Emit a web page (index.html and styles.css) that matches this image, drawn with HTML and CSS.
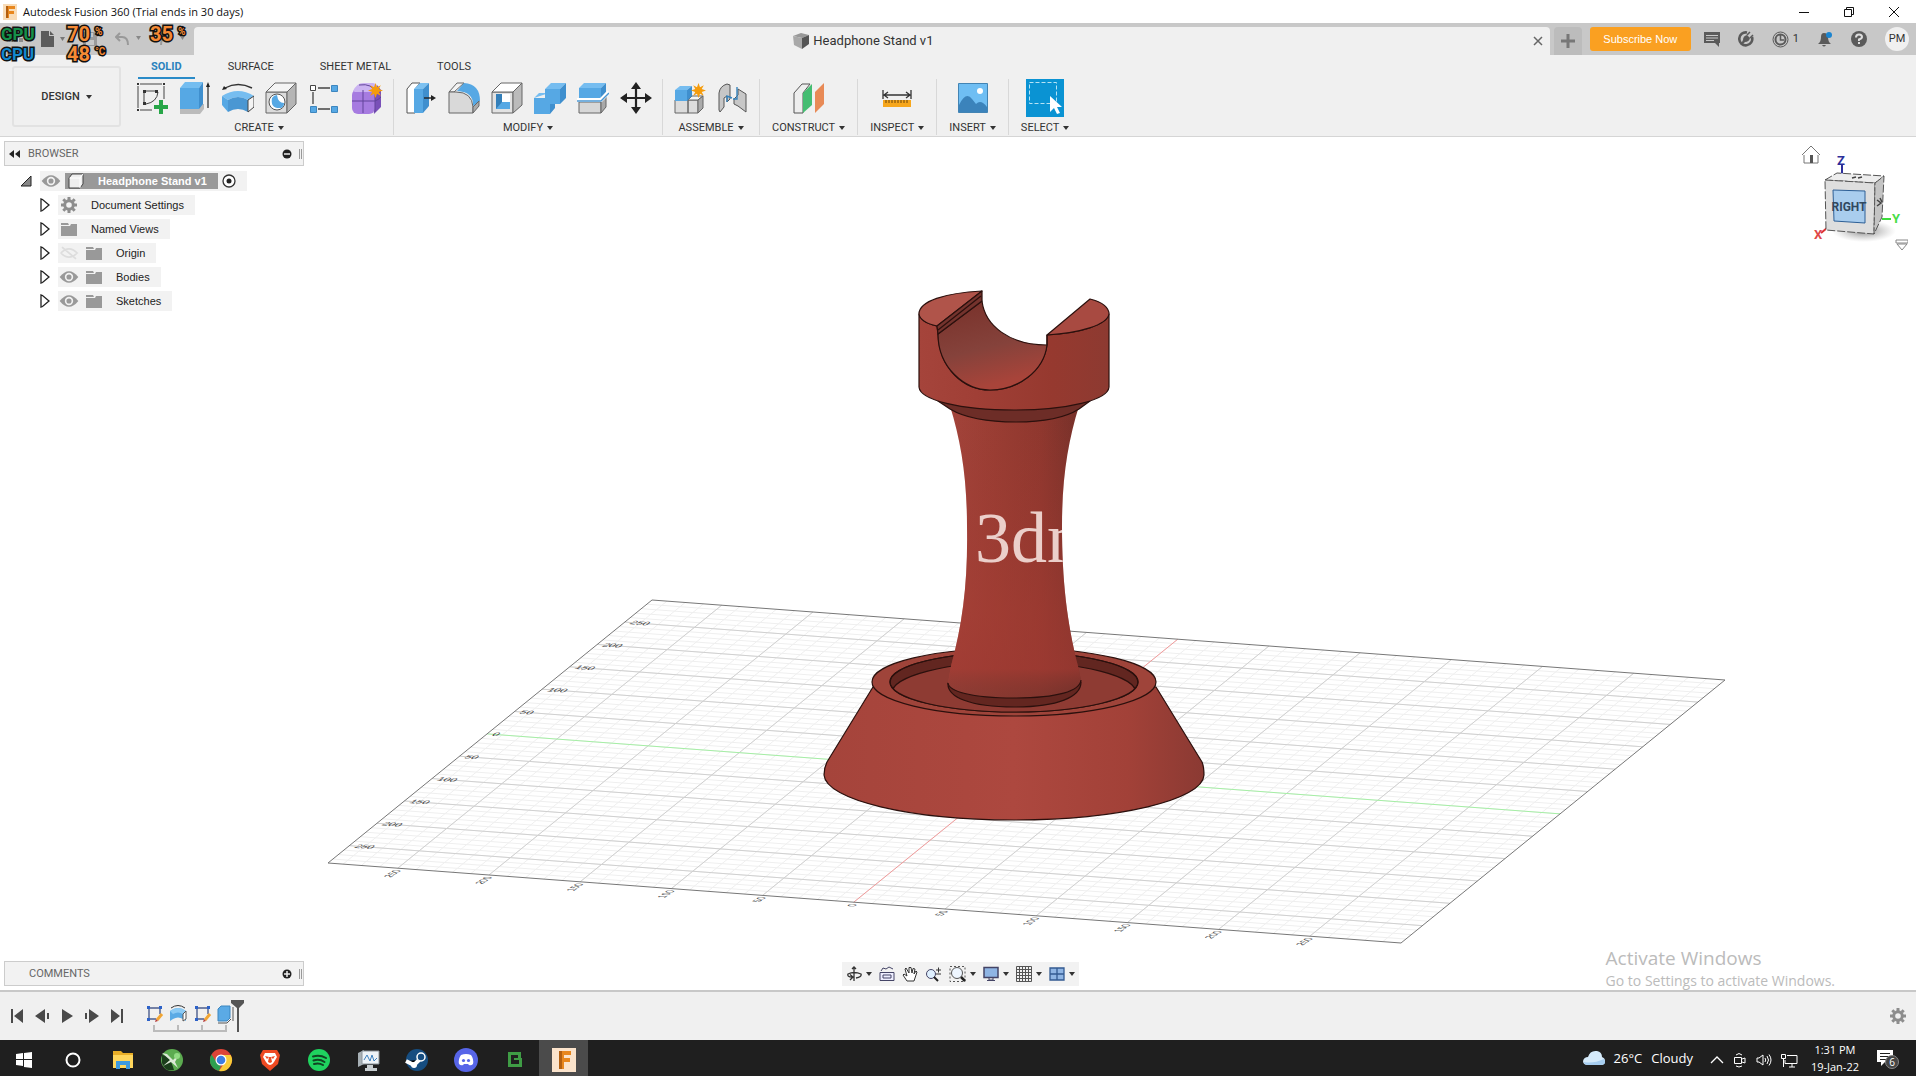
FILE: index.html
```html
<!DOCTYPE html>
<html lang="en">
<head>
<meta charset="utf-8">
<title>Autodesk Fusion 360</title>
<link rel="stylesheet" href="styles.css">
</head>
<body>
<svg class="defs" aria-hidden="true">
  <defs>
    <symbol id="folder" viewBox="0 0 16 14"><path fill="#999" d="M0 1h7l1 2H0zM0 4h9l1-2h6v12H0z"/></symbol>
    <symbol id="eye" viewBox="0 0 16 12"><path fill="#999" d="M0 6Q8-4 16 6 8 16 0 6z"/><circle cx="8" cy="6" r="3.6" fill="#f2f2f2"/><circle cx="8" cy="6" r="2.2" fill="#999"/></symbol>
    <symbol id="gear" viewBox="0 0 16 16"><circle cx="8" cy="8" r="4.3" fill="none" stroke="#8d8d8d" stroke-width="3"/><path stroke="#8d8d8d" stroke-width="3" d="M8 0v3M8 13v3M0 8h3M13 8h3M2.3 2.3l2 2M11.7 11.7l2 2M13.7 2.3l-2 2M4.3 11.7l-2 2"/></symbol>
    <symbol id="arrow" viewBox="0 0 10 14"><path fill="#fff" stroke="#222" stroke-width="1.3" d="M1 1v12l1.5-.5L9 7 2.500 1.500z"/></symbol>
    <symbol id="sketch-step" viewBox="0 0 18 18"><path fill="none" stroke="#4b5c8c" stroke-width="1.400" d="M3 3h11v6M3 3v11h7"/><path fill="#2d62c8" d="M1 1h3v3H1zM13 1h3v3h-3zM1 13h3v3H1z"/><path stroke="#f1a533" stroke-width="3" d="M16 9l-5 6"/><path fill="#b63c3c" d="M9 17l1-3 2 2z"/></symbol>
    <symbol id="burst" viewBox="0 0 14 14"><path fill="#f59c0c" d="M7 0l1.400 4L12 2l-2 3.600L14 7l-4 1.400L12 12 8.400 10 7 14l-1.400-4L2 12l2-3.600L0 7l4-1.400L2 2l3.600 2z"/></symbol>
  </defs>
</svg>
<div class="app">
  <header class="titlebar">
    <svg class="app-logo" viewBox="0 0 14 16" width="14" height="16"><path fill="#f8dcb8" d="M0 0h14v16H0z"/><path fill="#e8871e" d="M3 2h9v3H6v2h5v3H6v4H3z"/><path fill="#b35f10" d="M3 2h2v12H3z"/></svg>
    <h1 class="window-title">Autodesk Fusion 360 (Trial ends in 30 days)</h1>
    <div class="window-buttons">
      <button aria-label="Minimize"><svg width="12" height="12"><path stroke="#111" d="M1 6.500h10"/></svg></button>
      <button aria-label="Restore"><svg width="12" height="12"><path fill="none" stroke="#111" d="M1.500 3.500h7v7h-7zM3.500 3V1.500h7v7H9"/></svg></button>
      <button aria-label="Close window"><svg width="12" height="12"><path stroke="#111" d="M1 1l10 10M11 1L1 11"/></svg></button>
    </div>
  </header>

  <div class="tabstrip">
    <div class="quick-access">
      <button aria-label="Data panel"><svg width="14" height="14"><path fill="#8b8b8b" d="M0 1h4v4H0zM5 1h4v4H5zM10 1h4v4h-4zM0 6h4v4H0zM5 6h4v4H5zM10 6h4v4h-4z"/></svg></button>
      <button aria-label="File"><svg width="24" height="16"><path fill="#5c5c5c" d="M0 0h8v5h5v11H0zM9 0l4 4H9z"/><path fill="#777" d="M19 6h5l-2.500 4z"/></svg></button>
      <button aria-label="Save"><svg width="14" height="14"><path fill="#9b9b9b" d="M0 0h14v14H0zM3 8v5h8V8zM3 1v4h7V1z" fill-rule="evenodd"/></svg></button>
      <button aria-label="Undo"><svg width="26" height="14"><path fill="none" stroke="#999" stroke-width="2" d="M5 1L1 5l4 4M2 5h5q6 0 6 8"/><path fill="#888" d="M21 4h5l-2.500 4z"/></svg></button>
      <button aria-label="Redo"><svg width="26" height="14"><path fill="none" stroke="#999" stroke-width="2" d="M8 1l4 4-4 4M12 5H8Q2 5 2 13"/><path fill="#888" d="M21 4h5l-2.500 4z"/></svg></button>
    </div>
    <div class="document-tab">
      <div class="document-name">
        <svg width="16" height="16" viewBox="0 0 16 16"><path fill="#999" d="M0 3l8-3 8 2-7 3z"/><path fill="#a9a9a9" d="M0 3l9 2v11l-8-4z"/><path fill="#555" d="M9 5l7-3v9l-7 5z"/></svg>
        <span>Headphone Stand v1</span>
      </div>
      <button class="close-tab" aria-label="Close document"><svg width="10" height="10"><path stroke="#666" stroke-width="1.500" d="M1 1l8 8M9 1L1 9"/></svg></button>
    </div>
    <button class="new-tab" aria-label="New design"><svg width="14" height="14"><path stroke="#777" stroke-width="3" d="M7 0v14M0 7h14"/></svg></button>
    <button class="subscribe">Subscribe Now</button>
    <div class="account">
      <button aria-label="Comments"><svg width="16" height="15"><path fill="#5a5a5a" d="M0 0h16v11h-1v4l-4-4H0z"/><path stroke="#c8c8c8" stroke-width="1.200" d="M2 3.500h12M2 6h12M2 8.500h8"/></svg></button>
      <button aria-label="Extensions"><svg width="16" height="16"><path fill="none" stroke="#5a5a5a" stroke-width="2.600" d="M14 6a6.500 6.500 0 1 1-5-4.500"/><path fill="#5a5a5a" d="M5 9q0-4 4-5l3 3q-1 4-5 4l-3 3-1-1z"/><path stroke="#5a5a5a" stroke-width="1.500" d="M9 4l3-3M12 7l3-3"/></svg></button>
      <button class="jobs" aria-label="Job status"><svg width="17" height="17"><circle cx="8.500" cy="8.500" r="7.500" fill="none" stroke="#5a5a5a"/><circle cx="8.500" cy="8.500" r="5" fill="none" stroke="#5a5a5a" stroke-width="2"/><path fill="none" stroke="#5a5a5a" stroke-width="1.500" d="M8.500 4v5H12"/></svg><span>1</span></button>
      <button aria-label="Notifications"><svg width="16" height="16"><path fill="#5a5a5a" d="M1 13q3-2 3-7 0-4 3-4 4 0 4 4 0 5 3 7zM5 14h4q-2 3-4 0z"/><circle cx="12" cy="4" r="3" fill="#1a84d0"/></svg></button>
      <button aria-label="Help"><svg width="16" height="16"><circle cx="8" cy="8" r="8" fill="#5a5a5a"/><path fill="none" stroke="#ddd" stroke-width="2" d="M5 6.500Q5 3.500 8 3.500t3 2.500Q11 7.500 8 8.500V10M8 11v2"/></svg></button>
      <button class="avatar">PM</button>
    </div>
  </div>

  <div class="ribbon">
    <button class="workspace">DESIGN <i class="caret"></i></button>
    <div class="ribbon-main">
      <nav class="ribbon-tabs">
        <button class="active">SOLID</button><button>SURFACE</button><button>SHEET METAL</button><button>TOOLS</button>
      </nav>
      <div class="groups">
        <section class="group">
          <div class="tools">
            <button aria-label="Create sketch"><svg viewBox="0 0 32 32"><path fill="none" stroke="#444" d="M4 2h22M2 4v22M28 4v13M4 28h12M8 20V9h12M22 10q-1 10-12 12"/><path fill="#333" d="M1 1h2v2H1zM27 1h2v2h-2zM1 27h2v2H1zM7 8h3v3H7zM19 8h3v3h-3zM7 20h3v3H7z"/><path fill="#27a648" d="M23 18h4v5h5v4h-5v5h-4v-5h-5v-4h5z"/></svg></button>
            <button aria-label="Extrude"><svg viewBox="0 0 32 32"><path fill="#bbb" d="M1 27l5-5h19v5l-4 5H1z"/><path fill="#56a8e4" d="M1 6h19v21H1z"/><path fill="#74bdf0" d="M1 6l5-6h18l-4 6z"/><path fill="#3f8fce" d="M20 6l4-6v22l-4 5z"/><path stroke="#333" stroke-width="1.300" d="M29 26V3"/><path fill="#222" d="M27 5l2-5 2 5z"/></svg></button>
            <button aria-label="Revolve"><svg viewBox="0 0 32 32"><path fill="none" stroke="#333" stroke-width="1.400" d="M3 6Q16-1 30 6"/><path fill="#222" d="M0 8l2-4 3 3z"/><path fill="#76bdf0" d="M0 14Q16 4 32 14l-6 4q-10-6-20 0z"/><path fill="#56a8e4" d="M0 14l6 4v12l-6-7z"/><path fill="#4a97d3" d="M6 18q10-6 20 0v12q-10-6-20 0z"/><path fill="#f4f4f4" stroke="#444" d="M26 18l6-4v11l-6 5z"/></svg></button>
            <button aria-label="Hole"><svg viewBox="0 0 32 32"><path fill="#dcdcdc" stroke="#666" d="M1 10h21v21H1z"/><path fill="#f4f4f4" stroke="#666" d="M1 10l9-9h21l-9 9z"/><path fill="#b5b5b5" stroke="#666" d="M22 10l9-9v21l-9 9z"/><circle cx="12" cy="20" r="8" fill="#fff" stroke="#555"/><path fill="#56a8e4" d="M7 16q-2 11 9 10 3-1 3-5-6 0-7-8-3 0-5 3z"/></svg></button>
            <button aria-label="Rectangular pattern"><svg viewBox="0 0 32 32"><path fill="none" stroke="#444" stroke-width="1.300" d="M10 6h12M5 10v12M10 27h12"/><path fill="#fff" stroke="#444" d="M2.500 3.500h5v5h-5z"/><path fill="#56a8e4" stroke="#3d86bf" d="M23.500 3.500h6v6h-6zM2.500 24.500h6v6h-6zM23.500 24.500h6v6h-6z"/></svg></button>
            <button aria-label="Create form"><svg viewBox="0 0 32 32"><path fill="#7950b8" d="M21 10l5-7 4 5v17l-7 7z"/><rect x="1" y="7" width="23" height="25" rx="6" fill="#a67be0"/><path fill="#cbb3f1" d="M2 9q4-8 10-8h10q5 1 4 5l-4 4H4z"/><path fill="none" stroke="#62449b" d="M1 19h23q3-1 6-4M12 8v23M8 3q14-2 16 8v19"/><use href="#burst" x="17" y="1" width="15" height="15"/></svg></button>
          </div>
          <button class="group-label">CREATE <i class="caret"></i></button>
        </section>
        <section class="group">
          <div class="tools">
            <button aria-label="Press pull"><svg viewBox="0 0 32 32"><path fill="#fff" stroke="#555" d="M2 7l5-6h8l-5 6v24H2z"/><path fill="#56a8e4" d="M9 7h9v24H9z"/><path fill="#7cc1f1" d="M9 7l6-6h9l-6 6z"/><path fill="#3f8fce" d="M18 7l6-6v23l-6 7z"/><path stroke="#222" stroke-width="1.400" d="M19 16h9"/><path fill="#222" d="M26 13l5 3-5 3z"/></svg></button>
            <button aria-label="Fillet"><svg viewBox="0 0 32 32"><path fill="#f3f3f3" stroke="#666" d="M1 10l8-9h7L6 10z"/><path fill="#56a8e4" d="M16 1q16 1 16 18l-7 5q1-14-16-15z"/><path fill="#d9d9d9" stroke="#666" d="M1 10h7q16 0 17 15v6H1z"/><path fill="#aaa" stroke="#666" d="M25 25l6-6v5l-6 7z"/></svg></button>
            <button aria-label="Shell"><svg viewBox="0 0 32 32"><path fill="#e2e2e2" stroke="#666" d="M1 10h21v21H1z"/><path fill="#fff" stroke="#666" d="M1 10l9-9h21l-9 9z"/><path fill="#bbb" stroke="#666" d="M22 10l9-9v22l-9 8z"/><path fill="#56a8e4" d="M5 12h14v15H5z"/><path fill="#fff" d="M11 12h8v8h-8z"/><path fill="#347fb9" d="M5 12h6v8l-6 7z"/></svg></button>
            <button aria-label="Combine"><svg viewBox="0 0 32 32"><path fill="#76bdf0" d="M0 16l5-5h6V7l6-6h15l-6 6H12v5z"/><path fill="#56a8e4" d="M0 16h11V7h15v15H16v10H0z"/><path fill="#3f8fce" d="M26 7l6-6v15l-6 6zM16 22h5v4l-5 6z"/></svg></button>
            <button aria-label="Split body"><svg viewBox="0 0 32 32"><path fill="#d7d7d7" stroke="#666" d="M2 20h22v11H2z"/><path fill="#a9a9a9" stroke="#666" d="M24 20l5-6v11l-5 6z"/><path fill="#56a8e4" d="M2 6h22v10H2z"/><path fill="#76bdf0" d="M2 6l5-5h22l-5 5z"/><path fill="#3f8fce" d="M24 6l5-5v9l-5 6z"/><path fill="none" stroke="#fff" stroke-width="4" d="M0 18h24l8-8"/><path fill="none" stroke="#4b96d2" stroke-width="1.500" d="M0 19h24l8-8"/></svg></button>
            <button aria-label="Move"><svg viewBox="0 0 32 32"><path stroke="#222" stroke-width="2.200" d="M16 4v24M4 16h24"/><path fill="#222" d="M16 0l5 7H11zM16 32l5-7H11zM0 16l7-5v10zM32 16l-7-5v10z"/></svg></button>
          </div>
          <button class="group-label">MODIFY <i class="caret"></i></button>
        </section>
        <section class="group">
          <div class="tools">
            <button aria-label="New component"><svg viewBox="0 0 32 32"><path fill="#dcdcdc" stroke="#666" d="M1 18h13v13H1zM14 18h10v13H14z"/><path fill="#f5f5f5" stroke="#666" d="M14 18l4-4h11l-5 4z"/><path fill="#aaa" stroke="#666" d="M24 18l5-4v12l-5 5z"/><path fill="#56a8e4" d="M1 8h12v11H1z"/><path fill="#76bdf0" d="M1 8l5-4h12l-5 4z"/><path fill="#3f8fce" d="M13 8l5-4v10l-5 5z"/><use href="#burst" x="17" y="1" width="15" height="15"/></svg></button>
            <button aria-label="Joint"><svg viewBox="0 0 32 32"><path fill="#c7c7c7" stroke="#555" d="M2 11q1-7 8-9l3 1v14l-3 3v-6l-3 2v9l-4 5-1-2zM17 17l4-4V7l8 5v18l-8-6-4-2z"/><path fill="none" stroke="#3583bd" stroke-width="1.400" d="M10 20v-6l5 2M20 5v12h-4"/></svg></button>
          </div>
          <button class="group-label">ASSEMBLE <i class="caret"></i></button>
        </section>
        <section class="group wide">
          <div class="tools"><button aria-label="Construct plane"><svg viewBox="0 0 32 32"><path fill="#eee" stroke="#555" d="M1 11l8-9h8l-7 9v20H1z"/><path fill="#45bd72" d="M10 11l9-9v21l-9 8z"/><path fill="#e88a56" d="M22 10l9-9v21l-9 9z"/></svg></button></div>
          <button class="group-label">CONSTRUCT <i class="caret"></i></button>
        </section>
        <section class="group wide">
          <div class="tools"><button aria-label="Measure"><svg viewBox="0 0 32 32"><path fill="none" stroke="#333" stroke-width="1.300" d="M2 8v9M30 8v9M4 13h24M7 10l-4 3 4 3M25 10l4 3-4 3"/><path fill="#f7a71c" d="M2 18h28v7H2z"/><path stroke="#6a4206" d="M5 18v3M8 18v3M11 18v3M14 18v3M17 18v3M20 18v3M23 18v3M26 18v3"/></svg></button></div>
          <button class="group-label">INSPECT <i class="caret"></i></button>
        </section>
        <section class="group wide">
          <div class="tools"><button aria-label="Insert image"><svg viewBox="0 0 32 32"><path fill="#6fbef3" stroke="#4284b4" d="M1.500 1.500h29v29h-29z"/><circle cx="23" cy="9" r="3" fill="#fff"/><path fill="#3b83bb" d="M2 23q7-14 13-6l4 5q5-5 11 3v5H2z"/></svg></button></div>
          <button class="group-label">INSERT <i class="caret"></i></button>
        </section>
        <section class="group wide">
          <div class="tools"><button class="selected" aria-label="Select"><svg viewBox="0 0 38 38"><path fill="none" stroke="#b7e3f5" stroke-dasharray="4 2" d="M3.500 3.500h27v21h-27z"/><path fill="#fff" d="M24 17v16l4-4 3 6 3-1-3-6h5z"/></svg></button></div>
          <button class="group-label">SELECT <i class="caret"></i></button>
        </section>
      </div>
    </div>
  </div>

  <main class="viewport">
    <svg class="scene" viewBox="0 137 1916 853" role="img" aria-label="Headphone stand model">
      <defs>
        <linearGradient id="side"><stop offset="0" stop-color="#a5443b"/><stop offset=".3" stop-color="#a03f36"/><stop offset=".7" stop-color="#96392f"/><stop offset="1" stop-color="#8d3a31"/></linearGradient>
        <linearGradient id="shaft"><stop offset="0" stop-color="#a3443b"/><stop offset=".35" stop-color="#993d33"/><stop offset=".7" stop-color="#8e372e"/><stop offset="1" stop-color="#743029"/></linearGradient>
        <linearGradient id="shade" x2="0" y2="1"><stop offset="0" stop-color="#a03a32" stop-opacity="0"/><stop offset=".7" stop-color="#a63c33" stop-opacity=".5"/><stop offset=".9" stop-color="#a03a32" stop-opacity=".7"/><stop offset="1" stop-color="#6e332d" stop-opacity=".4"/></linearGradient>
        <linearGradient id="base"><stop offset="0" stop-color="#a5443b"/><stop offset=".5" stop-color="#ad483f"/><stop offset=".8" stop-color="#a24138"/><stop offset="1" stop-color="#8b3a33"/></linearGradient>
        <linearGradient id="groove" x2=".3" y2="1"><stop offset="0" stop-color="#783029"/><stop offset=".6" stop-color="#85423b"/><stop offset="1" stop-color="#a8443a"/></linearGradient>
        <clipPath id="well"><ellipse cx="1014" cy="682" rx="124" ry="30"/></clipPath>
        <clipPath id="column"><path d="M950 406C961 441 967 478 967 526C968 580 963 623 951 678H1079C1067 623 1062 580 1062 526C1062 478 1068 441 1079 406Z"/></clipPath>
      </defs>
      <g id="grid"></g>
      <g stroke="#2b100d" stroke-width="1.200" stroke-linejoin="round">
        <path fill="url(#base)" d="M873 687L827 762C824 768 824 771 824 775C826 800 910 820 1014 820S1203 800 1204 775C1204 770 1204 767 1202 762L1156 687Z"/>
        <ellipse cx="1014" cy="682" rx="142" ry="34" fill="#9f443a"/>
        <ellipse cx="1014" cy="682" rx="124" ry="30" fill="#622620"/>
        <ellipse cx="1014" cy="693" rx="122" ry="31" fill="#8e3b33" clip-path="url(#well)"/>
        <ellipse cx="1014" cy="682" rx="124" ry="30" fill="none"/>
        <path fill="#632620" d="M948 683C947 697 970 707 1014 707S1081 697 1081 682Z"/>
        <g stroke="none">
          <path id="shaft-body" fill="url(#shaft)" d="M950 406C961 441 967 478 967 526C968 580 963 623 951 666L948 683C949 691 970 698 1014 698S1080 691 1081 680L1078 666C1067 623 1062 580 1062 526C1062 478 1068 441 1079 406Z"/>
          <path fill="url(#shade)" d="M950 406C961 441 967 478 967 526C968 580 963 623 951 666L948 683C949 691 970 698 1014 698S1080 691 1081 680L1078 666C1067 623 1062 580 1062 526C1062 478 1068 441 1079 406Z"/>
        </g>
        <path fill="none" d="M948 683C949 691 970 698 1014 698S1080 691 1081 680"/>
        <path fill="#6d2d27" d="M938 401L950 409C965 418 988 422 1016 422C1048 422 1068 416 1079 409L1090 401Z"/>
        <path fill="url(#side)" d="M919 314V387C920 400 960 410 1014 410S1108 400 1109 387V314C1107 325 1080 333 1047 335V345C1043 372 1018 390 990 390C964 390 940 370 938 334L937 326C928 324 920 320 919 314Z"/>
        <path fill="#b0544a" d="M982 291C945 293 919 301 919 314C920 320 928 324 937 326Z"/>
        <path fill="#a84a41" d="M1047 335L1090 299C1103 302 1109 308 1109 314C1107 325 1080 333 1047 335Z"/>
        <path fill="url(#groove)" d="M938 334C938 368 965 390 990 390C1018 390 1044 371 1047 345C1010 345 985 326 982 301Z"/>
        <path fill="#74332d" d="M937 326L982 291V301L938 334Z"/>
        <path fill="none" d="M938 330L981 296M1047 345V335"/>
      </g>
      <text class="watermark" x="975" y="562" clip-path="url(#column)">3dm</text>
    </svg>

    <section class="browser">
      <div class="panel-head">
        <svg width="11" height="8"><path fill="#222" d="M5 0v8L0 4zM11 0v8L6 4z"/></svg>
        <h2>BROWSER</h2>
        <button aria-label="Collapse"><svg width="10" height="10"><circle cx="5" cy="5" r="4.500" fill="#222"/><path stroke="#eee" stroke-width="1.500" d="M2 5h6"/></svg></button>
        <i class="grip"></i>
      </div>
      <ul class="tree">
        <li class="root"><svg class="opened" width="12" height="12"><path fill="#888" stroke="#222" d="M11 1v10H1z"/></svg>
          <div class="node"><svg class="icon"><use href="#eye"/></svg><button class="title"><svg width="16" height="16" viewBox="0 0 16 16"><path fill="#eee" stroke="#444" d="M1 5l3-4h11v10l-3 4H1z"/><path fill="none" stroke="#fff" d="M1.500 5H12v10M12 5l3-4"/></svg>Headphone Stand v1</button><svg width="14" height="14"><circle cx="7" cy="7" r="6" fill="#fff" stroke="#333" stroke-width="1.300"/><circle cx="7" cy="7" r="2.500" fill="#222"/></svg></div></li>
        <li><svg class="closed"><use href="#arrow"/></svg><button class="node"><svg class="icon gear"><use href="#gear"/></svg><span>Document Settings</span></button></li>
        <li><svg class="closed"><use href="#arrow"/></svg><button class="node"><svg class="icon"><use href="#folder"/></svg><span>Named Views</span></button></li>
        <li><svg class="closed"><use href="#arrow"/></svg><button class="node"><svg class="icon" viewBox="0 0 16 12"><path fill="none" stroke="#ddd" stroke-width="1.500" d="M1 6q7-7 14 0-7 7-14 0M2 1l12 10"/></svg><svg class="icon"><use href="#folder"/></svg><span>Origin</span></button></li>
        <li><svg class="closed"><use href="#arrow"/></svg><button class="node"><svg class="icon"><use href="#eye"/></svg><svg class="icon"><use href="#folder"/></svg><span>Bodies</span></button></li>
        <li><svg class="closed"><use href="#arrow"/></svg><button class="node"><svg class="icon"><use href="#eye"/></svg><svg class="icon"><use href="#folder"/></svg><span>Sketches</span></button></li>
      </ul>
    </section>

    <svg class="viewcube" width="112" height="120" viewBox="1796 137 112 120">
      <defs><radialGradient id="cube-shadow"><stop offset="0" stop-color="#555" stop-opacity=".7"/><stop offset="1" stop-color="#999" stop-opacity="0"/></radialGradient></defs>
      <path fill="#fff" stroke="#777" d="M1802 155l9-9 9 9M1804 155v8h14v-8"/><path fill="#555" d="M1810 155h3v8h-3z"/>
      <ellipse cx="1864" cy="231" rx="32" ry="11" fill="url(#cube-shadow)"/>
      <path stroke="#2c2f9b" stroke-width="2" d="M1842 165v9"/><path stroke="#d33" stroke-width="2" d="M1827 228l-6 5"/><path stroke="#3ddc3d" stroke-width="2" d="M1882 219h9"/>
      <g stroke="#555" stroke-dasharray="8 2"><path fill="#ededed" d="M1825 180l12-7 47 3-9 7z"/><path fill="#dedede" d="M1825 180l50 3-1 51-48-4z"/><path fill="#c4c4c4" d="M1875 183l9-7-2 41-8 17z"/></g>
      <path fill="#a9cdee" stroke="#2d5f96" d="M1833 190l32 1v32l-31-2z"/>
      <path fill="none" stroke="#444" stroke-width="1.500" d="M1852 178l4-1M1858 178l4-1M1877 200l4 3-4 3M1880 198l2 4"/>
      <text class="cube-face" x="1849" y="211" text-anchor="middle">RIGHT</text>
      <text class="axis" x="1837" y="165" fill="#2c2f9b">Z</text><text class="axis" x="1814" y="239" fill="#e04848">X</text><text class="axis" x="1892" y="223" fill="#48dd48">Y</text>
      <path fill="#fff" stroke="#888" d="M1896 240h12v3h-12zM1897 244h10l-5 6z"/>
    </svg>

    <div class="bottom-row">
      <div class="panel-head comments">
        <h2>COMMENTS</h2>
        <button aria-label="Add comment"><svg width="10" height="10"><circle cx="5" cy="5" r="4.500" fill="#222"/><path stroke="#eee" stroke-width="1.500" d="M2 5h6M5 2v6"/></svg></button>
        <i class="grip"></i>
      </div>
      <div class="navbar">
        <button aria-label="Orbit"><svg width="16" height="16"><path fill="none" stroke="#333" stroke-width="1.300" d="M8 1v14M6 3l2-2 2 2M10 12q6-1 5-4-7-3-13 0-1 3 4 3M4 8.500l3 2.500-3 3"/></svg><i class="caret"></i></button>
        <button aria-label="Look at"><svg width="16" height="16"><path fill="#eef" stroke="#446" d="M1 6.500h14v8H1zM4 9h8v3H4z"/><path fill="none" stroke="#446" d="M2 5l2-3 3 1 3-2 4 2"/></svg></button>
        <button aria-label="Pan"><svg width="16" height="16"><path fill="#fff" stroke="#333" d="M5 15l-4-6 1-1 3 2-2-7 1-1 3 5V1.500h2L10 7l1-4.500 2 .5-1 5 2-3 1 1-3 9z"/></svg></button>
        <button aria-label="Zoom"><svg width="17" height="16"><circle cx="6" cy="8" r="4.500" fill="#dff0ff" stroke="#446"/><path stroke="#222" stroke-width="2" d="M9 11l4 4"/><path stroke="#333" d="M11 4h5M13.500 1.500v5M11 8h5"/></svg></button>
        <button aria-label="Fit"><svg width="17" height="16"><path fill="none" stroke="#555" stroke-dasharray="2 2" d="M1 .5h15v15H1z"/><circle cx="8" cy="7" r="5.500" fill="#eef6ff" stroke="#555"/><path stroke="#222" stroke-width="2.500" d="M12 11l4 4"/></svg><i class="caret"></i></button>
        <button aria-label="Display"><svg width="16" height="16"><path fill="#8fb5e4" stroke="#446" stroke-width="1.500" d="M1 1.500h14v10H1z"/><path fill="none" stroke="#446" d="M6 12v2h4v-2M4 14.500h8"/></svg><i class="caret"></i></button>
        <button aria-label="Grid"><svg width="16" height="16"><path fill="none" stroke="#555" d="M.5.500h15v15H.5zM3.500 0v16M6.500 0v16M9.500 0v16M12.500 0v16M0 3.500h16M0 6.500h16M0 9.500h16M0 12.500h16"/></svg><i class="caret"></i></button>
        <button aria-label="Viewports"><svg width="16" height="16"><path fill="#8fb5e4" stroke="#335a91" stroke-width="1.300" d="M1 2h14v12H1zM8 2v12M1 8h14"/></svg><i class="caret"></i></button>
      </div>
    </div>
    <div class="activate"><p class="activate-title">Activate Windows</p><p>Go to Settings to activate Windows.</p></div>
  </main>

  <div class="timeline">
    <div class="playback">
      <button aria-label="To start"><svg width="14" height="14"><path fill="#4a4a4a" d="M1 0h2v14H1zM13 0v14L4 7z"/></svg></button>
      <button aria-label="Step back"><svg width="14" height="14"><path fill="#4a4a4a" d="M10 0v14L0 7zM12 4h2v6h-2z"/></svg></button>
      <button aria-label="Play"><svg width="14" height="14"><path fill="#4a4a4a" d="M2 0v14l11-7z"/></svg></button>
      <button aria-label="Step forward"><svg width="14" height="14"><path fill="#4a4a4a" d="M4 0v14l10-7zM0 4h2v6H0z"/></svg></button>
      <button aria-label="To end"><svg width="14" height="14"><path fill="#4a4a4a" d="M1 0v14l9-7zM11 0h2v14h-2z"/></svg></button>
    </div>
    <svg class="steps" width="104" height="34">
      <use href="#sketch-step" x="3" y="6" width="18" height="18"/>
      <path fill="none" stroke="#333" d="M28 9q7-5 14 0"/><path fill="#5baae5" d="M27 12q8-6 16 0v10l-3-2q-5-3-10 0l-3 2z"/><path fill="#8ccaf4" d="M27 12q8-6 16 0l-3 3q-5-3-10 0z"/><path fill="#fff" stroke="#555" d="M40 15l3-3v8l-3 2z"/>
      <use href="#sketch-step" x="51" y="6" width="18" height="18"/>
      <path fill="#5baae5" stroke="#3d86bf" d="M75 10l3-3h9v12l-3 3h-9z"/><path fill="none" stroke="#555" d="M75 24h9l4-4M90 22V8"/>
      <path fill="none" stroke="#bbb" stroke-width="2" d="M11 26v6h72v-6M35 26v6M59 26v6"/>
      <path fill="#555" d="M88 1h13v3l-5 5v24h-2V9l-6-5z"/>
    </svg>
    <button class="settings" aria-label="Timeline settings"><svg width="16" height="16"><use href="#gear"/></svg></button>
  </div>

  <footer class="taskbar">
    <div class="apps">
      <button aria-label="Start"><svg viewBox="0 0 24 24"><path fill="#fff" d="M3 6l7-1v6H3zM11 5l8-1v7h-8zM3 12h7v6l-7-1zM11 12h8v8l-8-1z"/></svg></button>
      <button aria-label="Cortana"><svg viewBox="0 0 24 24"><circle cx="11" cy="12" r="6.500" fill="none" stroke="#fff" stroke-width="2"/></svg></button>
      <button aria-label="File Explorer"><svg viewBox="0 0 24 24"><path fill="#e9ae27" d="M2 3h8l2 2h10v15H2z"/><path fill="#ffd65c" d="M2 7h20v13H2z"/><path fill="#3d9ae0" d="M5 13h14v8h-4v-4H9v4H5z"/></svg></button>
      <button aria-label="Game client"><svg viewBox="0 0 24 24"><circle cx="12" cy="12" r="11" fill="#5cab50"/><path fill="#1b3d1b" d="M2 7q8 0 12 15-9 2-12-7z"/><path fill="#dce7d6" d="M2 5l5 1 6 6 7-7-5 9 3 6-7-6-8 4 7-6z"/><circle cx="17" cy="8" r="3" fill="#92db83"/></svg></button>
      <button aria-label="Chrome"><svg viewBox="0 0 24 24"><circle cx="12" cy="12" r="11" fill="#dc4437"/><path fill="#2d9f50" d="M2.500 6.500L8 15l4 2-2 6A11 11 0 0 1 2.500 6.500z"/><path fill="#f8cb37" d="M12 7h9.700A11 11 0 0 1 10 23l6-9z"/><circle cx="12" cy="12" r="5.500" fill="#fff"/><circle cx="12" cy="12" r="4.300" fill="#3d7de2"/></svg></button>
      <button aria-label="Brave"><svg viewBox="0 0 24 24"><path fill="#ee4a23" d="M5 2h14l3 5-2 9-8 7-8-7L2 7z"/><path fill="#fff" d="M7 5h10l2 4-3 5-4 5-4-5-3-5z"/><path fill="#ee4a23" d="M7 8l4 1-2 2zM17 8l-4 1 2 2zM11 9h2l1 5-2 1-2-1zM9 16l3 1 3-1-3 4z"/></svg></button>
      <button aria-label="Spotify"><svg viewBox="0 0 24 24"><circle cx="12" cy="12" r="11" fill="#1fd35f"/><path fill="none" stroke="#142" stroke-width="2" stroke-linecap="round" d="M6 8.500q7-2 13 1.500M6.500 12.500q6-2 11 1.500M7 16q5-1.500 9 1"/></svg></button>
      <button aria-label="Monitor"><svg viewBox="0 0 24 24"><path fill="#a7b0b5" d="M2 5l6-3v14l-6 3z"/><path fill="#edf3f8" stroke="#8a9399" d="M6 3h17v13H6z"/><path fill="none" stroke="#3e81bf" d="M8 12l3-5 3 6 2-6 2 6 3-3"/><path fill="#c7cdd0" d="M11 17h6v3h4v3H9v-3h2z"/></svg></button>
      <button aria-label="Steam"><svg viewBox="0 0 24 24"><circle cx="12" cy="12" r="11" fill="#164d80"/><path stroke="#fff" stroke-width="4" d="M1 13l8 4 5-5"/><circle cx="16" cy="9" r="4" fill="#164d80" stroke="#fff" stroke-width="1.500"/><circle cx="9" cy="17" r="3" fill="#fff"/></svg></button>
      <button aria-label="Discord"><svg viewBox="0 0 24 24"><circle cx="12" cy="12" r="12" fill="#5765e8"/><path fill="#fff" d="M7 7q5-2 10 0 3 4 2 9-2 2-4 1l-1-1h-4l-1 1q-2 1-4-1-1-5 2-9z"/><circle cx="9.500" cy="12.500" r="1.600" fill="#5765e8"/><circle cx="14.500" cy="12.500" r="1.600" fill="#5765e8"/></svg></button>
      <button aria-label="Green app"><svg viewBox="0 0 24 24"><path fill="#3f9c45" fill-rule="evenodd" d="M5 4h13v6h1v9H5zM8 7v9h8v-4h-5v-2h4V7z"/></svg></button>
      <button class="running" aria-label="Fusion 360"><svg viewBox="0 0 24 24"><path fill="#fbe3cb" d="M0 0h24v24H0z"/><path fill="#e8871e" d="M7 3h12v4h-7v3h6v4h-6v7H7z"/><path fill="#b35f10" d="M7 3h3v18H7z"/></svg></button>
    </div>
    <div class="tray">
      <button class="weather"><svg width="22" height="16"><path fill="#d5eafa" d="M5 15Q0 15 0 11q1-4 5-4 2-7 9-6 5 1 5 6 3 1 3 4 0 4-4 4z"/><path fill="#a6cdf0" d="M5 15Q1 15 1 12q9 2 20-3 3 6-3 6z"/></svg><span>26°C</span><span>Cloudy</span></button>
      <div class="tray-icons">
        <svg width="14" height="14"><path fill="none" stroke="#fff" stroke-width="1.300" d="M1 10l6-6 6 6"/></svg>
        <svg width="14" height="16"><path fill="none" stroke="#fff" d="M1.500 5.500h7v6h-7zM9 7l3-1v5l-3-1M3 3q3-3 6 0M3 14q3 2 6 0"/></svg>
        <svg width="16" height="14"><path fill="none" stroke="#fff" d="M1 5h2l4-3v10L3 9H1zM9 5q1.500 2 0 4M11 3q3 4 0 8M13 1.500q4 5.500 0 11"/></svg>
        <svg width="17" height="15"><path fill="none" stroke="#fff" d="M6 2.500h10v8H4V7M8 14h6M11 11v3M.5 1.500h4v4h-4zM2.500 6v8"/></svg>
      </div>
      <div class="clock"><time>1:31 PM</time><time>19-Jan-22</time></div>
      <button class="notices" aria-label="6 notifications"><svg width="17" height="16"><path fill="#fff" d="M0 0h16v12H8l-4 4v-4H0z"/><path stroke="#1f1f1f" d="M3 3.500h10M3 6.500h10M3 9.500h6"/></svg><span>6</span></button>
    </div>
  </footer>

  <div class="monitor-osd">
    <b class="gpu">GPU</b><b>70<sup>%</sup></b><b>35<sup>%</sup></b>
    <b class="cpu">CPU</b><b>48<sup>°C</sup></b>
  </div>
</div>
<script src="scene.js"></script>
</body>
</html>
```
FILE: styles.css
```css
* { box-sizing: border-box; }
body { margin: 0; font: 11px/16px Roboto, "Liberation Sans", sans-serif; color: #333; }
button { border: 0; padding: 0; background: none; font: inherit; color: inherit; display: flex; align-items: center; justify-content: center; }
h1, h2, p, ul { margin: 0; padding: 0; font-weight: 400; list-style: none; }
svg { display: block; flex: none; }
.defs { position: absolute; width: 0; height: 0; }
.app { position: relative; min-height: 100vh; display: flex; flex-direction: column; background: #fff; }
.caret { display: inline-block; border: 3px solid transparent; border-top: 4px solid #333; border-bottom: 0; }

.titlebar { height: 23px; display: flex; align-items: center; padding-left: 3px; gap: 6px; }
.window-title { font: 11px/16px "Open Sans", sans-serif; color: #111; flex: 1; }
.window-buttons { display: flex; }
.window-buttons button { width: 45px; height: 22px; }

.tabstrip { height: 32px; display: flex; background: #c8c8c8; }
.quick-access { width: 194px; display: flex; align-items: center; gap: 18px; padding-left: 9px; }
.document-tab { flex: 1; margin-top: 4px; background: #f0f0f0; border-radius: 4px 4px 0 0; display: flex; align-items: center; padding-right: 7px; }
.document-name { flex: 1; display: flex; justify-content: center; gap: 4px; font-size: 13px; }
.new-tab { width: 28px; margin: 4px 8px 0 4px; background: #bcbcbc; border-radius: 4px 4px 0 0; }
.subscribe { width: 101px; height: 24px; margin-top: 4px; background: #faa021; border-radius: 3px; color: #fff; font: 11px/16px "Liberation Sans", sans-serif; }
.account { display: flex; align-items: center; padding: 0 7px 0 13px; gap: 18px; }
.jobs { gap: 4px; }
.avatar { width: 24px; height: 24px; border-radius: 50%; background: #f0f0f0; }

.ribbon { height: 82px; display: flex; background: #f0f0f0; border-bottom: 1px solid #d5d5d5; padding-left: 12px; }
.workspace { width: 109px; height: 61px; margin: 11px 4px 0 0; border: 2px solid #e2e2e2; border-radius: 3px; gap: 6px; font-weight: 500; }
.ribbon-tabs { display: flex; gap: 20px; padding-left: 13px; }
.ribbon-tabs button { height: 24px; padding: 2px 13px 0; border-bottom: 2px solid transparent; }
.ribbon-tabs .active { color: #2a82bd; font-weight: 700; border-color: #2a8bc8; }
.groups { display: flex; }
.group { height: 56px; display: flex; flex-direction: column; align-items: center; padding: 0 5px; border-right: 1px solid #d8d8d8; }
.group:last-child { border: 0; }
.group.wide { padding: 0 12px; }
.tools { display: flex; height: 38px; flex: none; }
.tools button { width: 43px; height: 38px; }
.tools svg { width: 32px; height: 32px; }
.tools .selected { width: 38px; background: #0a93d3; }
.tools .selected svg { width: 38px; height: 38px; }
.group-label { height: 22px; flex: none; gap: 4px; white-space: nowrap; }

.viewport { flex: 1; position: relative; display: grid; grid-template: minmax(0, 1fr) / minmax(0, 1fr); border-bottom: 2px solid #c8c8c8; }
.viewport > * { grid-area: 1 / 1; }
.scene { width: 100%; height: 100%; }
.minor { stroke: #efefef; }
.major { stroke: #d0d0d0; }
.edge { stroke: #777; fill: none; }
.axis-x { stroke: #f19a9a; }
.axis-y { stroke: #a5eea5; }
.tick { font: 11px "Liberation Sans", sans-serif; fill: #444; }
.watermark { font: 72px "Liberation Serif", serif; fill: #ebcfca; }
.cube-face { font: bold 12px Roboto, sans-serif; fill: #31485f; }
.axis { font: bold 13px Roboto, sans-serif; }
.viewcube { align-self: start; justify-self: end; margin-right: 8px; }

.browser { align-self: start; justify-self: start; padding: 4px; }
.panel-head { width: 300px; height: 25px; display: flex; align-items: center; padding-left: 4px; background: #f2f2f2; border: 1px solid #ccc; }
.panel-head h2 { flex: 1; font-size: 11px; line-height: 16px; color: #666; padding-left: 8px; }
.grip { width: 3px; height: 10px; margin: 0 1px 0 7px; border: 1px solid #999; border-width: 0 1px; }
.tree { padding-top: 3px; font: 11px/16px "Liberation Sans", sans-serif; color: #222; }
.tree li { height: 24px; display: flex; align-items: center; gap: 8px; padding-left: 36px; }
.tree .root { padding-left: 16px; }
.node { height: 20px; display: flex; align-items: center; background: #f2f2f2; gap: 3px; padding-right: 11px; }
.icon { width: 22px; height: 14px; }
.icon.gear { height: 16px; }
.closed { width: 10px; height: 14px; }
.node span { padding-left: 8px; }
.title { height: 16px; gap: 14px; padding: 0 11px 0 3px; margin-right: 1px; background: #999; color: #fff; font-weight: 700; }

.bottom-row { align-self: end; display: grid; grid-template-columns: 1fr auto 1fr; align-items: center; padding: 0 0 4px 4px; }
.comments h2 { padding-left: 20px; }
.navbar { height: 24px; display: flex; align-items: center; gap: 7px; padding: 0 4px; background: #f2f2f2; }
.navbar button { gap: 4px; }
.activate { position: absolute; right: 81px; bottom: 0; font: 14px/18px "Open Sans", sans-serif; color: #bbb; }
.activate .activate-title { font-size: 19px; line-height: 28px; }

.timeline { height: 48px; display: flex; align-items: center; background: #f0f0f0; padding: 0 10px; }
.playback { display: flex; gap: 11px; margin-right: 19px; }
.settings { margin-left: auto; }

.taskbar { height: 36px; display: flex; justify-content: space-between; background: #1f1f1f; color: #fff; font: 12px/17px "Open Sans", sans-serif; }
.apps, .tray, .tray-icons { display: flex; align-items: center; }
.apps button { width: 49px; height: 36px; padding-top: 4px; }
.apps svg { width: 24px; height: 24px; }
.running { background: #4b4b4b; }
.tray { padding: 0 22px 0 0; }
.weather { gap: 9px; font-size: 13px; }
.tray-icons { gap: 9px; padding: 4px 13px 0 17px; }
.clock { display: flex; flex-direction: column; align-items: center; font-size: 11px; margin-right: 18px; }
.notices { position: relative; }
.notices span { position: absolute; left: 8px; top: 5px; width: 14px; height: 14px; border-radius: 50%; background: #444; border: 1px solid #888; font-size: 10px; line-height: 12px; }

.monitor-osd { position: absolute; left: 1px; top: 24px; display: grid; grid-template-columns: 66px 83px auto; font: 17px/20px Roboto, sans-serif; color: #f58a35; -webkit-text-stroke: 3px #111; paint-order: stroke fill; }
.monitor-osd b { font-weight: 700; }
.monitor-osd b:not([class]) { font-size: 20px; }
.monitor-osd .gpu { color: #159049; }
.monitor-osd .cpu { color: #1287cc; }
.monitor-osd sup { font-size: 10px; line-height: 8px; vertical-align: 6px; padding-left: 5px; }
```
FILE: scene.js
```js
// Ground plane: origin corner plus the two edge directions, in scene units.
const corner = [652, 600];
const along = [1073, 80];
const down = [-324, 263];
const point = (a, b) => [corner[0] + along[0] * a + down[0] * b, corner[1] + along[1] * a + down[1] * b];
const grid = document.getElementById('grid');
const add = (name, attrs, text) => {
  const el = document.createElementNS('http://www.w3.org/2000/svg', name);
  for (const key in attrs) el.setAttribute(key, attrs[key]);
  if (text !== undefined) el.textContent = text;
  grid.append(el);
};
const line = (cls, from, to) => add('path', { class: cls, d: `M${from}L${to}` });
const across = (cls, b) => line(cls, point(0, b), point(1, b));
const upright = (cls, a) => line(cls, point(a, 0), point(a, 1));
const zeroA = 0.49, zeroB = 0.509, step = 0.085, subdivisions = 5;
for (let i = -30; i <= 30; i++) {
  const a = zeroA + i * step / subdivisions;
  const b = zeroB + i * step / subdivisions;
  if (a > 0 && a < 1) upright('minor', a);
  if (b > 0 && b < 1) across('minor', b);
}
for (let i = -5; i <= 5; i++) {
  if (i) { upright('major', zeroA + i * step); across('major', zeroB + i * step); }
}
upright('axis-x', zeroA);
across('axis-y', zeroB);
add('path', { class: 'edge', d: `M${point(0, 0)}L${point(1, 0)}L${point(1, 1)}L${point(0, 1)}Z` });
for (let i = -5; i <= 5; i++) {
  const [x, y] = point(0, zeroB + i * step);
  add('text', { class: 'tick', transform: `matrix(1 .07 -.6 .45 ${x + 4} ${y + 2})` }, Math.abs(i * 50));
  const [u, v] = point(zeroA + i * step, 1);
  add('text', { class: 'tick', 'text-anchor': 'end', transform: `matrix(.6 -.4 1 .07 ${u + 4} ${v + 2})` }, Math.abs(i * 50));
}
```
